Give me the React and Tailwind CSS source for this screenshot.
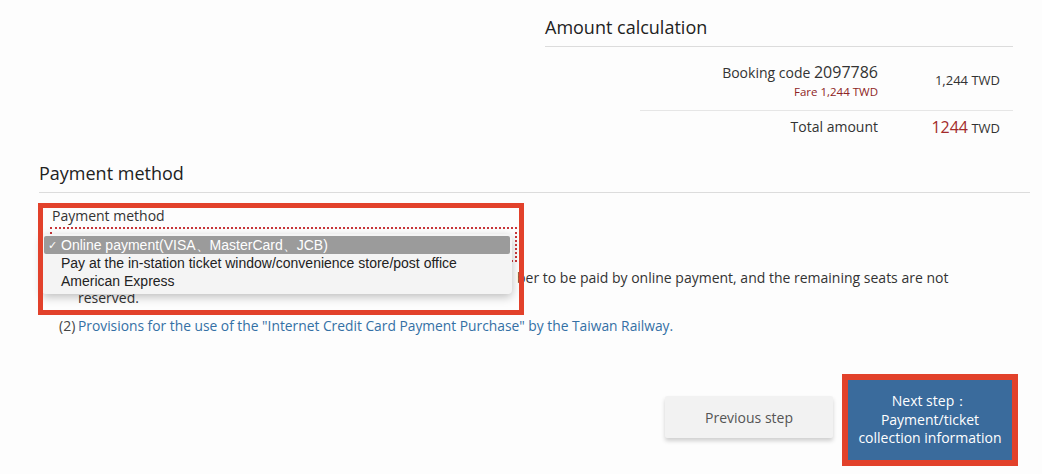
import React from 'react';

// Amount calculation block (top right)
const AmountCalculation = () => (
  <section className="ml-[545px] w-[468px] pt-[15px]">
    <h2 className="text-[18px] leading-[24px] text-[#222] pb-[7px] border-b border-[#dcdcdc]">
      Amount calculation
    </h2>
    <div className="flex justify-end items-center pt-[14px] pb-[10px] ml-[95px] border-b border-[#e6e6e6]">
      <div className="text-right">
        <div className="text-[14px] leading-[22px] text-[#333]">
          Booking code <span className="text-[16px]">2097786</span>
        </div>
        <div className="text-[11.5px] leading-[16px] text-[#8e2424]">Fare 1,244 TWD</div>
      </div>
      <div className="w-[135px] pr-[13px] text-right text-[13px] text-[#333]">1,244 TWD</div>
    </div>
    <div className="flex justify-end items-center pt-[4px] pb-[6px]">
      <div className="text-[14px] leading-[22px] text-[#333]">Total amount</div>
      <div className="w-[135px] pr-[13px] text-right text-[13px] text-[#333]">
        <span className="text-[16px] text-[#a32a2a]">1244</span> TWD
      </div>
    </div>
  </section>
);

// macOS style open select menu, drawn over the form
const SelectMenu = () => (
  <div className="absolute z-10 left-[42px] top-[234px] w-[470px] h-[60px] rounded-[4px] bg-[#f4f4f4] shadow-[0_3px_10px_rgba(0,0,0,0.25)] p-[2px] font-['Liberation_Sans',Arial,sans-serif] text-[14px]">
    <div className="flex items-center h-[18px] bg-[#9b9b9b] text-white rounded-[2px]">
      <span className="w-[17px] pl-[4px] text-[11px]">✓</span>
      <span>Online payment(VISA、MasterCard、JCB)</span>
    </div>
    <div className="flex items-center h-[18px] pl-[17px] text-[#222]">
      Pay at the in-station ticket window/convenience store/post office
    </div>
    <div className="flex items-center h-[18px] pl-[17px] text-[#222]">American Express</div>
  </div>
);

const PaymentMethod = () => (
  <section className="mt-[16px] px-[39px]">
    <h2 className="text-[18px] leading-[24px] text-[#222] pb-[7px] border-b border-[#dcdcdc] mr-[-27px]">
      Payment method
    </h2>
    <div className="ml-[11px]">
      <div className="mt-[14px] pl-[2px] text-[14px] leading-[18px] text-[#333]">Payment method</div>
      <div className="mt-[2px] w-[467px] h-[35px] border-2 border-dotted border-[#c8363a] flex items-center justify-end pr-[4px] text-[#555] text-[10px]">
        ˅
      </div>
    </div>
    <div className="ml-[20px] mt-[6px] text-[14px] leading-[20px] text-[#333]">
      <div className="flex">
        <span className="w-[19px] shrink-0">(1)</span>
        <p>
          {/* start of the sentence sits under the open menu */}
          <span className="inline-block w-[439px] h-[1px]" />
          ber to be paid by online payment, and the remaining seats are not
          <br />
          reserved.
        </p>
      </div>
      <div className="flex mt-[8px]">
        <span className="w-[19px] shrink-0 text-[#444]">(2)</span>
        <a href="#" className="text-[#3470a5] text-[13.8px]">
          Provisions for the use of the "Internet Credit Card Payment Purchase" by the Taiwan Railway.
        </a>
      </div>
    </div>
  </section>
);

const Buttons = () => (
  <div className="flex justify-end items-center gap-[9px] pr-[24px] mt-[38px]">
    <button className="w-[168px] h-[42px] mb-[6px] bg-[#f2f2f2] rounded-[2px] shadow-[0_3px_4px_rgba(0,0,0,0.18)] text-[14px] text-[#555]">
      Previous step
    </button>
    <div className="border-[6px] border-[#e2412b]">
      <button className="w-[164px] h-[80px] bg-[#3a6b9c] text-white text-[14px] leading-[18.5px] flex flex-col items-center justify-center">
        <span>Next step：</span>
        <span>Payment/ticket</span>
        <span>collection information</span>
      </button>
    </div>
  </div>
);

function App() {
  return (
    <div className="relative w-[1042px] h-[474px] overflow-hidden bg-[#fdfdfd] font-['Open_Sans',sans-serif]">
      <AmountCalculation />
      <PaymentMethod />
      <Buttons />
      <SelectMenu />
      {/* red annotation frame around the select */}
      <div className="absolute z-20 left-[38px] top-[203px] w-[486px] h-[112px] border-[5px] border-[#e2412b]" />
    </div>
  );
}

export default App;
